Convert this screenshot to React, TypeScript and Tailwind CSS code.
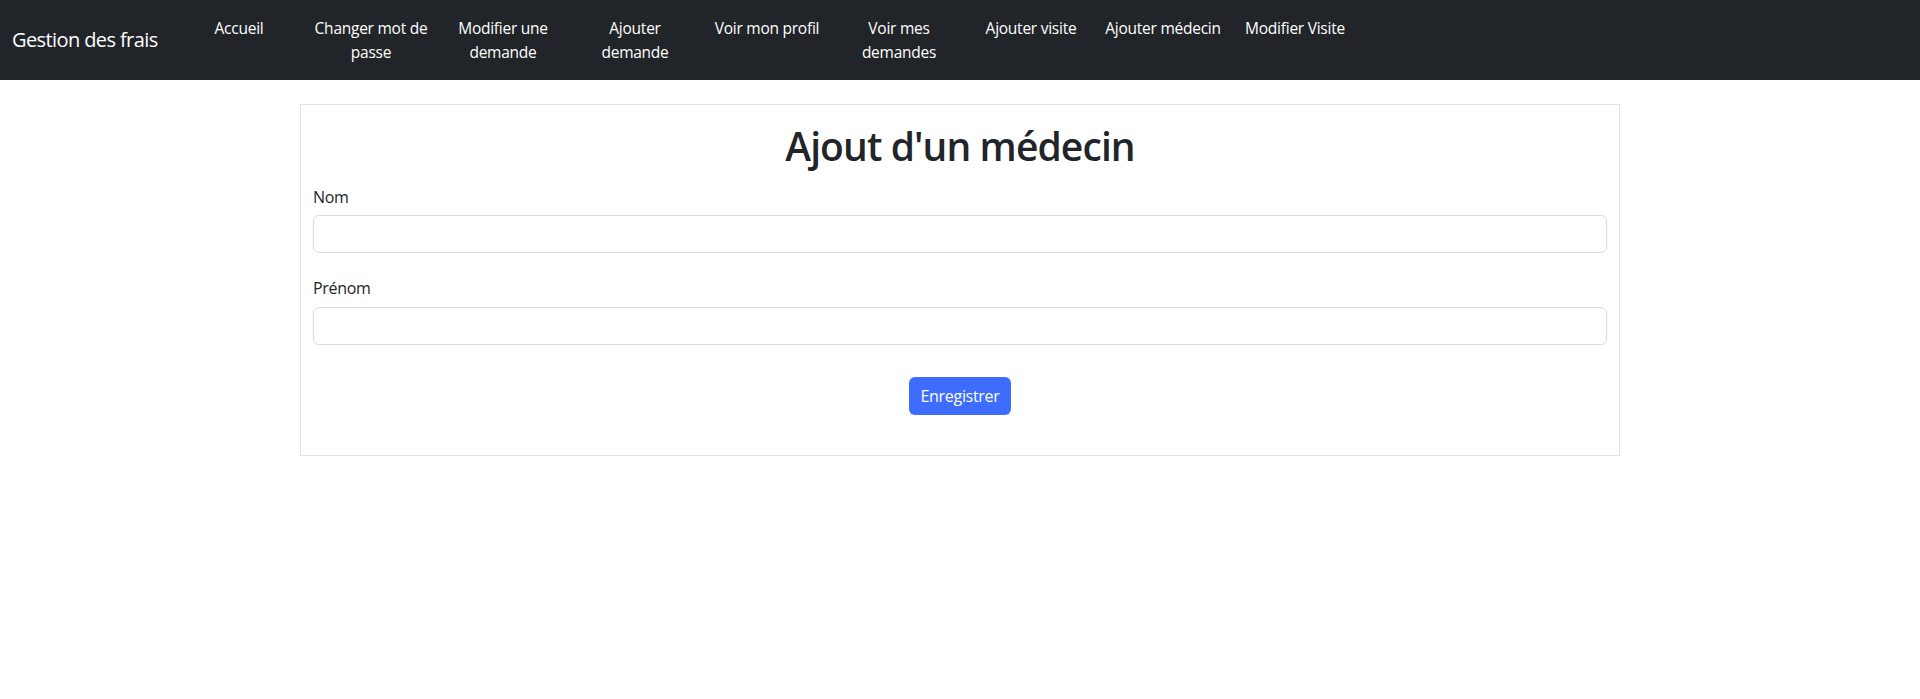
import React from "react";

const links: string[][] = [
  ["Accueil"],
  ["Changer mot de", "passe"],
  ["Modifier une", "demande"],
  ["Ajouter", "demande"],
  ["Voir mon profil"],
  ["Voir mes", "demandes"],
  ["Ajouter visite"],
  ["Ajouter médecin"],
  ["Modifier Visite"],
];

export default function App() {
  return (
    <div
      className="min-h-[699px] bg-white text-[#212529]"
      style={{ fontFamily: '"Open Sans", "Noto Sans", sans-serif' }}
    >
      <nav className="h-[80px] bg-[#212529] flex items-center px-3">
        <a className="w-[145px] mr-4 text-[20px] leading-[30px] text-white whitespace-nowrap tracking-[-0.6px]">
          Gestion des frais
        </a>
        <ul className="flex items-start h-[64px]">
          {links.map((l, i) => (
            <li key={i} className="w-[132px] flex justify-center">
              <a className="block py-2 text-center text-[15.5px] leading-6 text-white whitespace-nowrap tracking-[-0.25px]">
                {l.map((line, j) => (
                  <React.Fragment key={j}>
                    {j > 0 && <br />}
                    {line}
                  </React.Fragment>
                ))}
              </a>
            </li>
          ))}
        </ul>
      </nav>

      <div className="mx-auto mt-6 w-[1320px] border border-[#dfe2e6] px-3 pt-[17px] pb-[40px]">
        <h1 className="text-center text-[39px] leading-[48px] font-semibold mb-[15px] tracking-[-0.9px]">
          Ajout d'un médecin
        </h1>
        <form onSubmit={(e) => e.preventDefault()}>
          <label className="block text-[16px] leading-6 mb-[6px] tracking-[-0.3px]">Nom</label>
          <input
            type="text"
            className="block w-full h-[38px] rounded-md border border-[#d9dde2] bg-white px-3 outline-none"
          />
          <label className="block text-[16px] leading-6 mt-[23px] mb-[7px] tracking-[-0.3px]">Prénom</label>
          <input
            type="text"
            className="block w-full h-[38px] rounded-md border border-[#d9dde2] bg-white px-3 outline-none"
          />
          <div className="flex justify-center mt-[32px]">
            <button
              type="submit"
              className="w-[102px] h-[38px] rounded-md bg-[#3d6cfe] text-white text-[16px] leading-6 tracking-[-0.3px]"
            >
              Enregistrer
            </button>
          </div>
        </form>
      </div>
    </div>
  );
}
